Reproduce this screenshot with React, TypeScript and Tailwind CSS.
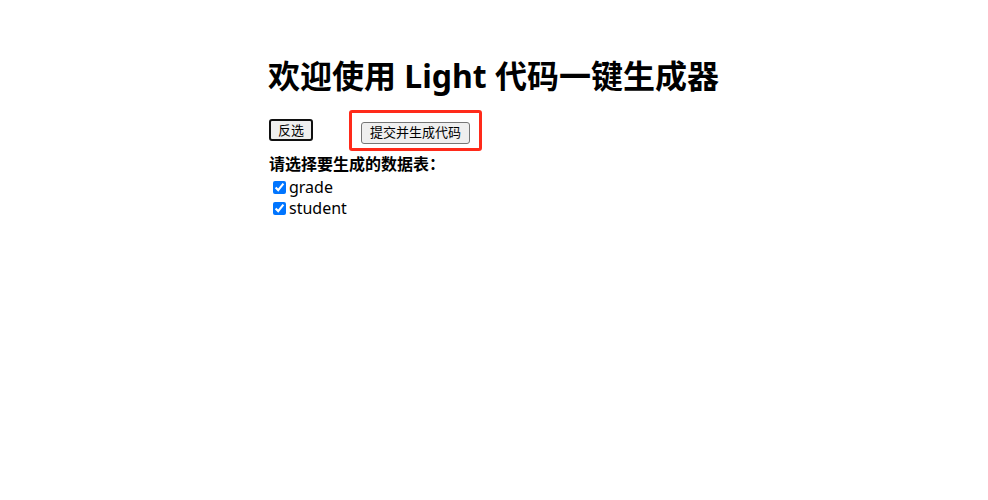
import { useState } from 'react';

const TABLES = ['grade', 'student'];

export default function App() {
  const [checked, setChecked] = useState<string[]>(TABLES);

  const toggle = (name: string) =>
    setChecked((prev) =>
      prev.includes(name) ? prev.filter((n) => n !== name) : [...prev, name],
    );

  const invert = () =>
    setChecked((prev) => TABLES.filter((n) => !prev.includes(n)));

  return (
    <div className="min-h-[500px] bg-white text-black font-['Segoe_UI','Noto_Sans','Noto_Sans_CJK_SC',sans-serif]">
      <div className="mx-auto w-fit pt-[55px]">
        <h1 className="text-[32px] font-bold leading-[42px] ml-[-1px]">
          欢迎使用 Light 代码一键生成器
        </h1>

        <div className="flex items-center mt-[13px]">
          <button
            onClick={invert}
            className="h-[22px] px-[7px] text-[13px] leading-none bg-[#efefef] border-2 border-[#101010] rounded-[3px]"
          >
            反选
          </button>
          <div className="ml-[36px] border-[3px] border-[#ff2a1a] rounded-[3px] px-[9px] pt-[6px] pb-[4px]">
            <button className="h-[22px] px-[8px] text-[13px] leading-none bg-[#efefef] border border-[#767676] rounded-[3px]">
              提交并生成代码
            </button>
          </div>
        </div>

        <div className="mt-[2px] mb-[2px] text-[16px] font-bold leading-[22px]">
          请选择要生成的数据表：
        </div>
        <div className="flex flex-col text-[16px] leading-[21px]">
          {TABLES.map((name) => (
            <label key={name} className="flex items-center">
              <input
                type="checkbox"
                checked={checked.includes(name)}
                onChange={() => toggle(name)}
                className="w-[13px] h-[13px] ml-[4px] mr-[3px] accent-[#0075ff]"
              />
              {name}
            </label>
          ))}
        </div>
      </div>
    </div>
  );
}
